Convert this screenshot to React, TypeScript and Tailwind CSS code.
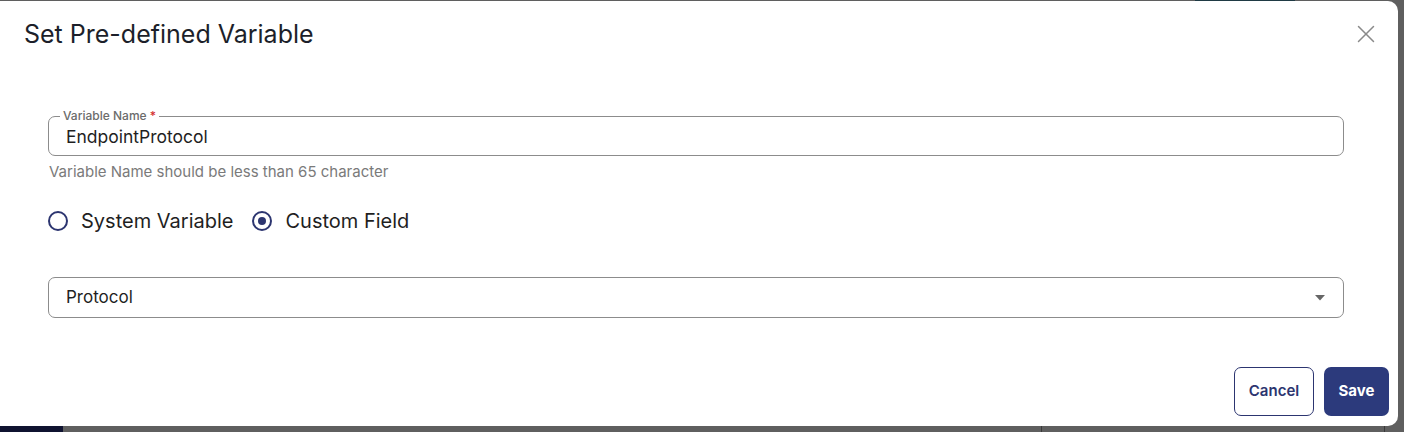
import { X } from "lucide-react";

export default function App() {
  return (
    <div className="relative w-[1404px] h-[432px] overflow-hidden bg-[#5f5f5f] font-['Inter',sans-serif]">
      {/* dimmed page behind the dialog */}
      <div className="absolute left-0 bottom-0 w-[63px] h-[6px] bg-[#0f1330]" />
      <div className="absolute left-[1041px] bottom-0 w-px h-[6px] bg-[#3a3a3a]" />
      <div className="absolute left-[1384px] bottom-0 w-px h-[6px] bg-[#3a3a3a]" />
      <div className="absolute left-[1195px] top-0 w-[100px] h-px bg-[#1f3a44]" />

      {/* Dialog */}
      <div className="absolute left-0 top-px w-[1398px] h-[425px] bg-white rounded-r-[10px] flex flex-col">
        <div className="flex items-center justify-between pl-6 pr-[17px] pt-[17px]">
          <h2 className="text-[25px] leading-[32px] text-[#1c1f2a]">Set Pre-defined Variable</h2>
          <button className="text-[#8a8a8a] -mt-[1px]">
            <X size={30} strokeWidth={1.2} />
          </button>
        </div>

        <div className="flex flex-col pl-12 pr-[54px] pt-[66px]">
          <div className="relative h-10 rounded-[7px] border border-[#8c8c8c] flex items-center pl-[17px]">
            <span className="absolute left-[11px] -top-[8px] bg-white px-[3px] text-[12px] leading-[14px] font-medium text-[#6b6b6b]">
              Variable Name <span className="text-[#d32f2f]">*</span>
            </span>
            <span className="text-[17.5px] text-[#1f1f1f] pt-[2px]">EndpointProtocol</span>
          </div>
          <p className="mt-[6px] pl-px text-[15px] leading-[19px] text-[#7a7a7a]">
            Variable Name should be less than 65 character
          </p>

          <div className="flex items-center mt-[28px] h-6">
            <label className="flex items-center">
              <span className="w-5 h-5 rounded-full border-2 border-[#2c3570]" />
              <span className="ml-[13px] text-[20px] text-[#1f1f1f]">System Variable</span>
            </label>
            <label className="flex items-center ml-[19px]">
              <span className="w-5 h-5 rounded-full border-2 border-[#2c3570] flex items-center justify-center">
                <span className="w-2 h-2 rounded-full bg-[#2c3570]" />
              </span>
              <span className="ml-[13px] text-[20px] text-[#1f1f1f]">Custom Field</span>
            </label>
          </div>

          <div className="mt-[44px] h-[41px] rounded-[7px] border border-[#8c8c8c] flex items-center justify-between pl-[17px] pr-[17px]">
            <span className="text-[17px] text-[#1f1f1f] pt-px">Protocol</span>
            <svg width="12" height="6" viewBox="0 0 12 6">
              <path d="M1 0h10L6 5.5z" fill="#666" />
            </svg>
          </div>
        </div>

        <div className="mt-auto flex justify-end gap-[10px] pr-[9px] pb-[10px]">
          <button className="w-20 h-[49px] rounded-[7px] border border-[#2c3570] text-[#2c3570] text-[15px] font-semibold">
            Cancel
          </button>
          <button className="w-[65px] h-[49px] rounded-[7px] bg-[#2c3a7c] text-white text-[15px] font-bold">
            Save
          </button>
        </div>
      </div>
    </div>
  );
}
